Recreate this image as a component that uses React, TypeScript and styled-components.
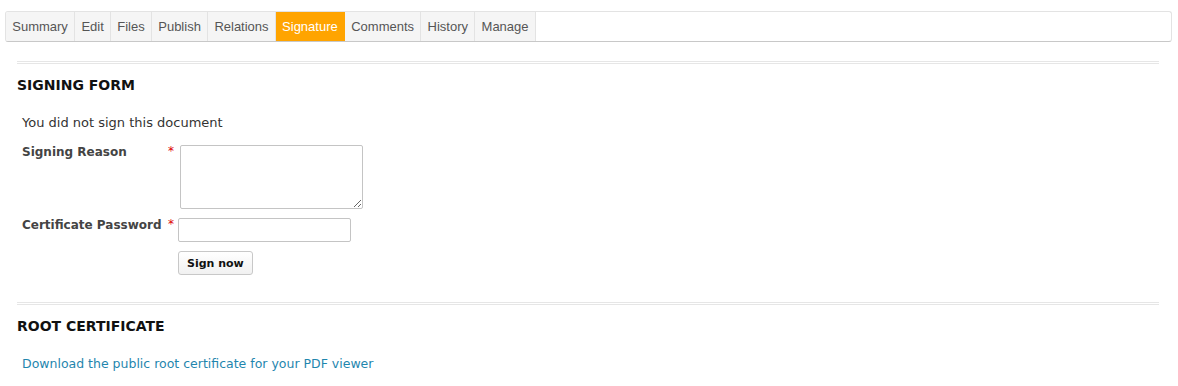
import styled, { createGlobalStyle } from 'styled-components'

const GlobalStyle = createGlobalStyle`
  body {
    margin: 0;
    background: #fff;
    font-family: 'DejaVu Sans', Verdana, sans-serif;
    color: #333;
  }
`

const TabBar = styled.nav`
  display: flex;
  margin: 11px 6px 0 5px;
  height: 29px;
  border: 1px solid #e3e3e3;
  border-bottom-color: #c8c8c8;
  border-radius: 3px;
  background: #fff;
  overflow: hidden;
`

const Tab = styled.a<{ $active?: boolean }>`
  display: flex;
  align-items: center;
  padding: 0 6.25px;
  font-family: 'Liberation Sans', Arial, sans-serif;
  font-size: 13px;
  color: ${(p) => (p.$active ? '#fff' : '#555')};
  background: ${(p) => (p.$active ? '#ffa400' : '#f5f5f5')};
  border-right: 1px solid ${(p) => (p.$active ? '#ffa400' : '#e3e3e3')};
  text-decoration: none;
  cursor: pointer;
`

const Content = styled.main`
  margin: 19px 19px 0 17px;
`

const Section = styled.section`
  border-top: 3px double #e6e6e6;
  padding-top: 13px;
  margin-bottom: 27px;
`

const Heading = styled.h2`
  margin: 0 0 18px;
  font-size: 14px;
  font-weight: bold;
  color: #111;
  text-transform: uppercase;
  line-height: 17px;
`

const Note = styled.p`
  margin: 0 0 14px 5px;
  padding-top: 2px;
  font-size: 13px;
  line-height: 17px;
  color: #333;
`

const FormRow = styled.div`
  display: flex;
  align-items: flex-start;
  margin: 0 0 9px 5px;
`

const Label = styled.label`
  width: 146px;
  font-size: 12px;
  font-weight: bold;
  color: #444;
  line-height: 15px;
`

const Required = styled.span`
  width: 10px;
  color: #d00;
  font-size: 12px;
  line-height: 12px;
`

const TextArea = styled.textarea`
  display: block;
  box-sizing: border-box;
  width: 183px;
  height: 64px;
  margin: 0 0 0 2px;
  border: 1px solid #c4c4c4;
  border-radius: 2px;
  resize: both;
  font-family: inherit;
`

const Input = styled.input`
  display: block;
  box-sizing: border-box;
  width: 173px;
  height: 24px;
  margin: 0;
  border: 1px solid #c4c4c4;
  border-radius: 2px;
`

const Button = styled.button`
  display: block;
  margin-left: 156px;
  height: 24px;
  padding: 0 8px;
  font-family: 'DejaVu Sans', Verdana, sans-serif;
  font-size: 11px;
  font-weight: bold;
  color: #111;
  background: linear-gradient(#fff, #f1f1f1);
  border: 1px solid #c8c8c8;
  border-radius: 3px;
`

const Link = styled.a`
  display: block;
  margin: 0 0 0 5px;
  padding-top: 2px;
  font-size: 12.5px;
  line-height: 17px;
  color: #1f86ae;
  text-decoration: none;
`

const tabs = ['Summary', 'Edit', 'Files', 'Publish', 'Relations', 'Signature', 'Comments', 'History', 'Manage']

export default function App() {
  return (
    <>
      <GlobalStyle />
      <TabBar>
        {tabs.map((t) => (
          <Tab key={t} $active={t === 'Signature'}>
            {t}
          </Tab>
        ))}
      </TabBar>
      <Content>
        <Section>
          <Heading>Signing form</Heading>
          <Note>You did not sign this document</Note>
          <FormRow>
            <Label>Signing Reason</Label>
            <Required>*</Required>
            <TextArea />
          </FormRow>
          <FormRow>
            <Label>Certificate Password</Label>
            <Required>*</Required>
            <Input type="password" />
          </FormRow>
          <FormRow>
            <Button>Sign now</Button>
          </FormRow>
        </Section>
        <Section>
          <Heading>Root certificate</Heading>
          <Link href="#">Download the public root certificate for your PDF viewer</Link>
        </Section>
      </Content>
    </>
  )
}
